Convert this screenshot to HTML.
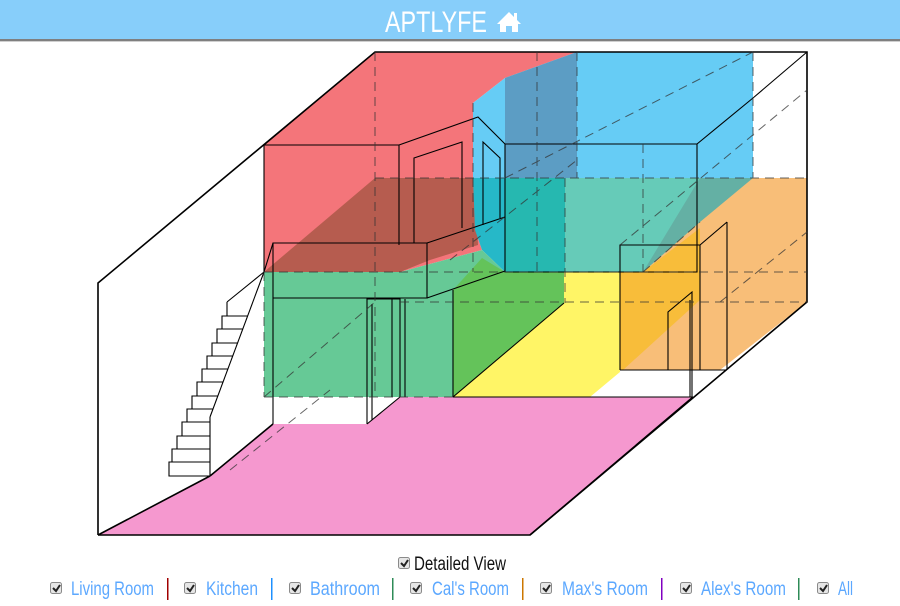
<!DOCTYPE html>
<html><head><meta charset="utf-8"><style>
html,body{margin:0;padding:0;background:#fff;width:900px;height:606px;overflow:hidden}
svg{display:block}
</style></head><body>
<svg width="900" height="606" viewBox="0 0 900 606" xmlns="http://www.w3.org/2000/svg" font-family="Liberation Sans, sans-serif">
<rect x="0" y="0" width="900" height="39" fill="#87CEFA"/>
<rect x="0" y="39" width="900" height="2" fill="#7f7f7f"/>
<rect x="0" y="41" width="900" height="1" fill="#cfcfcf"/>
<text x="385" y="32" font-size="30" fill="#fff" textLength="102" lengthAdjust="spacingAndGlyphs">APTLYFE</text>
<path d="M497 24 L509 12 L514 17 L514 13 L517 13 L517 20 L521 24 L518 24 L518 32 L512 32 L512 26 L506 26 L506 32 L500 32 L500 24 Z" fill="#fff"/>

<polygon points="98,535 210,476 273,424 367,424 400,397 693,397 530,535" fill="#F598CF"/>
<polygon points="564,272 620,272 620,372 590,397 453,397 564,303" fill="#FFF566"/>
<polygon points="807,178 807,302 720,370 620,370 620,245 700,178" fill="#F8BE78"/>
<polygon points="620,272 643,272 700,228 700,300 623,370 620,370" fill="#F8BD3A"/>
<polygon points="620,245 700,178 753,178 700,222 643,272 620,272" fill="#64B0A4"/>
<polygon points="264,145 375,52 577,52 505,78 473,103 475,230 482,250 400,272 264,272" fill="#F4757A"/>
<polygon points="264,272 375,178 475,178 478,245 430,260 400,272" fill="#B65C4F"/>
<polygon points="577,52 753,52 753,178 505,178 505,78" fill="#66CCF5"/>
<polygon points="505,78 577,52 577,178 505,178" fill="#5C9DC4"/>
<polygon points="473,103 505,78 505,178 473,178" fill="#66CCF5"/>
<polygon points="473,178 505,178 505,272 482,250 475,230" fill="#26B8C8"/>
<polygon points="505,178 565,178 565,272 505,272" fill="#26B8B0"/>
<polygon points="565,178 700,178 643,272 565,272" fill="#66CBB8"/>
<polygon points="264,272 400,272 482,250 505,272 453,290 453,397 264,397" fill="#66C996"/>
<polygon points="453,290 482,258 505,272 564,272 564,303 453,397" fill="#64C35A"/>

<g fill="none" stroke="#000" stroke-width="1.6">
<polyline points="98,535 98,283 375,52 807,52 807,302 530,535 98,535"/>
<line x1="98" y1="535" x2="210" y2="476"/>
<line x1="273" y1="424" x2="210" y2="476"/>
<line x1="693" y1="397" x2="530" y2="535"/>
</g>
<g fill="none" stroke="#000" stroke-width="1.1">
<polyline points="264,272 264,145 399,145 399,245"/>
<line x1="264" y1="145" x2="375" y2="52"/>
<polyline points="399,145 478,117 505,144 697,144 697,272 505,272"/>
<line x1="505" y1="144" x2="505" y2="272"/>
<line x1="697" y1="144" x2="753" y2="98"/>
<line x1="753" y1="98" x2="807" y2="52"/>
<polyline points="414,243 414,158 462,142 462,228"/>
<polyline points="483,225 483,142 500,158 500,218"/>
<polyline points="273,424 273,243 427,243 427,298 273,298"/>
<line x1="273" y1="243" x2="264" y2="272"/>
<line x1="427" y1="243" x2="505" y2="217"/>
<line x1="427" y1="298" x2="505" y2="271"/>
<polyline points="367,424 367,299 400,299 400,397"/>
<line x1="367" y1="424" x2="400" y2="397"/>
<line x1="372" y1="304" x2="372" y2="420"/>
<line x1="405" y1="299" x2="405" y2="397"/>
<line x1="392" y1="299" x2="392" y2="397"/>
<line x1="453" y1="290" x2="453" y2="397"/>
<line x1="564" y1="303" x2="453" y2="397"/>
<line x1="453" y1="397" x2="693" y2="397"/>
<polyline points="620,370 620,245 700,245 700,370 620,370"/>
<line x1="700" y1="245" x2="727" y2="222"/>
<line x1="727" y1="222" x2="727" y2="370"/>
<line x1="727" y1="370" x2="700" y2="370"/>
<polyline points="668,370 668,312 692,292 692,397"/>
<line x1="690" y1="300" x2="690" y2="397"/>
<line x1="264" y1="272" x2="227" y2="302"/>
<line x1="264" y1="272" x2="210" y2="417"/>
<line x1="210" y1="417" x2="210" y2="476"/>
<polyline points="227,302 227,316 222,316 222,329 217,329 217,343 212,343 212,356 207,356 207,369 202,369 202,382 197,382 197,396 192,396 192,409 187,409 187,422 182,422 182,436 177,436 177,449 172,449 172,462 169,462 169,476 210,476"/>
<line x1="227" y1="316" x2="248" y2="316"/>
<line x1="222" y1="329" x2="243" y2="329"/>
<line x1="217" y1="343" x2="238" y2="343"/>
<line x1="212" y1="356" x2="233" y2="356"/>
<line x1="207" y1="369" x2="228" y2="369"/>
<line x1="202" y1="382" x2="223" y2="382"/>
<line x1="197" y1="396" x2="218" y2="396"/>
<line x1="192" y1="409" x2="213" y2="409"/>
<line x1="187" y1="422" x2="210" y2="422"/>
<line x1="182" y1="436" x2="210" y2="436"/>
<line x1="177" y1="449" x2="210" y2="449"/>
<line x1="172" y1="462" x2="210" y2="462"/>
</g>
<g fill="none" stroke="#333" stroke-width="1" stroke-dasharray="9,6" opacity="0.75">
<line x1="375" y1="52" x2="375" y2="397"/>
<line x1="264" y1="272" x2="807" y2="272" />
<line x1="375" y1="178" x2="807" y2="178"/>
<line x1="400" y1="302" x2="807" y2="302"/>
<line x1="264" y1="397" x2="375" y2="302"/>
<line x1="264" y1="397" x2="453" y2="397"/>
<line x1="264" y1="272" x2="264" y2="397"/>
<line x1="577" y1="52" x2="577" y2="178"/>
<line x1="753" y1="52" x2="753" y2="178"/>
<line x1="537" y1="52" x2="537" y2="272"/>
<line x1="643" y1="144" x2="643" y2="272"/>
<line x1="473" y1="103" x2="473" y2="272"/>
<line x1="565" y1="178" x2="565" y2="303"/>
<line x1="505" y1="178" x2="753" y2="52"/>
<line x1="620" y1="245" x2="807" y2="90"/>
<line x1="643" y1="272" x2="700" y2="222"/>
<line x1="720" y1="302" x2="807" y2="232"/>
<line x1="230" y1="470" x2="330" y2="390"/>
<line x1="450" y1="260" x2="577" y2="160"/>
</g>

<g font-size="19" fill="#5CA8FF">
<g fill="#e6e6e6" stroke="#8a8a8a" stroke-width="1">
<rect x="398.5" y="557.5" width="11" height="11" rx="2"/>
<rect x="50.5" y="582.5" width="11" height="11" rx="2"/>
<rect x="184.5" y="582.5" width="11" height="11" rx="2"/>
<rect x="289.5" y="582.5" width="11" height="11" rx="2"/>
<rect x="410.5" y="582.5" width="11" height="11" rx="2"/>
<rect x="540.5" y="582.5" width="11" height="11" rx="2"/>
<rect x="680.5" y="582.5" width="11" height="11" rx="2"/>
<rect x="817.5" y="582.5" width="11" height="11" rx="2"/>
</g>
<g fill="none" stroke="#222" stroke-width="2">
<path d="M401 563 l3 3 l4 -6"/>
<path d="M53 588 l3 3 l4 -6"/>
<path d="M187 588 l3 3 l4 -6"/>
<path d="M292 588 l3 3 l4 -6"/>
<path d="M413 588 l3 3 l4 -6"/>
<path d="M543 588 l3 3 l4 -6"/>
<path d="M683 588 l3 3 l4 -6"/>
<path d="M820 588 l3 3 l4 -6"/>
</g>
<text x="414" y="570" fill="#111" textLength="92" lengthAdjust="spacingAndGlyphs">Detailed View</text>
<text x="71" y="595" textLength="83" lengthAdjust="spacingAndGlyphs">Living Room</text>
<text x="206" y="595" textLength="52" lengthAdjust="spacingAndGlyphs">Kitchen</text>
<text x="310" y="595" textLength="70" lengthAdjust="spacingAndGlyphs">Bathroom</text>
<text x="432" y="595" textLength="77" lengthAdjust="spacingAndGlyphs">Cal's Room</text>
<text x="562" y="595" textLength="86" lengthAdjust="spacingAndGlyphs">Max's Room</text>
<text x="701" y="595" textLength="85" lengthAdjust="spacingAndGlyphs">Alex's Room</text>
<text x="838" y="595" textLength="15" lengthAdjust="spacingAndGlyphs">All</text>
<rect x="167" y="578" width="1.5" height="22" fill="#A00000"/>
<rect x="271" y="578" width="1.5" height="22" fill="#1E90FF"/>
<rect x="392" y="578" width="1.5" height="22" fill="#2E8B57"/>
<rect x="522" y="578" width="1.5" height="22" fill="#CC7700"/>
<rect x="661" y="578" width="1.5" height="22" fill="#8000C0"/>
<rect x="798" y="578" width="1.5" height="22" fill="#2E8B57"/>
</g>
</svg>
</body></html>
